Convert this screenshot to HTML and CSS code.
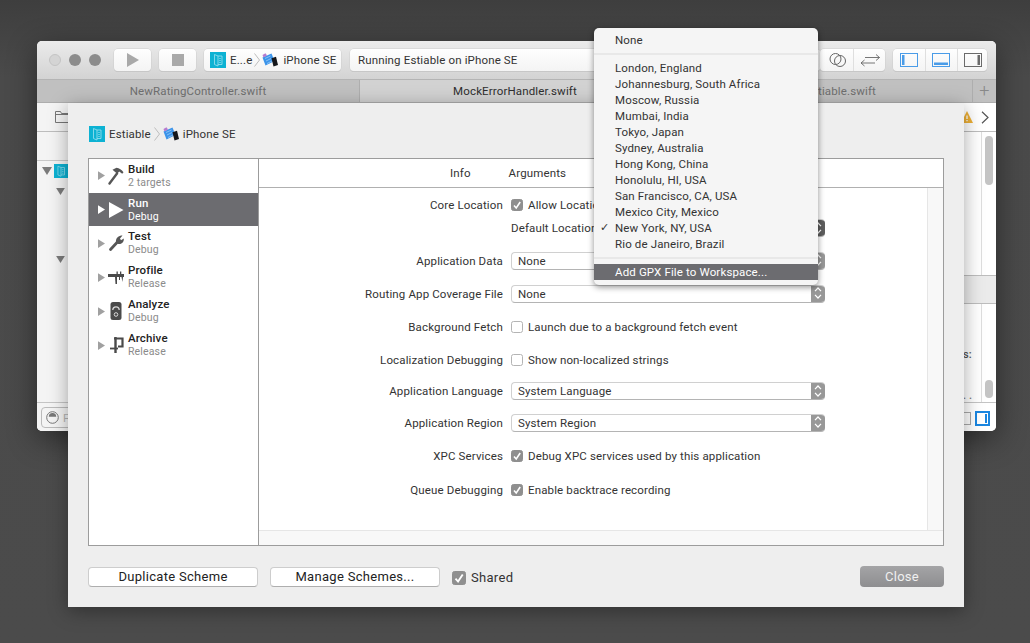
FILE: index.html
```html
<!DOCTYPE html>
<html lang="en">
<head>
<meta charset="utf-8">
<title>Estiable scheme editor</title>
<link rel="stylesheet" href="styles.css">
</head>
<body>
<svg class="defs" width="0" height="0" aria-hidden="true">
  <symbol id="proj" viewBox="0 0 16 16"><rect width="16" height="16" fill="#0db2d3"/><path d="M4.500 2.500 8 4v10l-3.500-1.500zM8 4h4v8.500H8" fill="none" stroke="#8fdcec" stroke-width=".9"/><path d="M9.200 6.500h1.600M9.200 8.500h1.600M9.200 10.500h1.600" stroke="#8fdcec" stroke-width=".8" fill="none"/></symbol>
  <symbol id="device" viewBox="0 0 16 14"><path d="M.5 4.500 9.500 .5 12.500 8 3.500 12.500z" fill="#3b94ea"/><path d="M3 5.500 8.500 3M4 8l5-2.500M5 10.500l5-2.500" stroke="#a9d3f8" stroke-width=".7"/><path d="M.5 2 3.500 .3 5 2.400 1.500 4.500z" fill="#b67ccf"/><path d="M9.500 5.300 14 3.800 16 12 11.500 13.600z" fill="#15171b"/></symbol>
  <symbol id="tri" viewBox="0 0 8 10"><path d="M0 0 8 5 0 10z" fill="currentColor"/></symbol>
  <symbol id="chev" viewBox="0 0 6 14"><path d="M.5 .5 5.500 7 .5 13.500" fill="none" stroke="#bdbdbd"/></symbol>
  <symbol id="down" viewBox="0 0 10 8"><path d="M0 0h10L5 8z" fill="#7b7b7b"/></symbol>
  <symbol id="stepper" viewBox="0 0 14 18"><path d="M4 7.200 7 4l3 3.200M4 10.800 7 14l3-3.200" fill="none" stroke="currentColor" stroke-width="1.200"/></symbol>
  <symbol id="check" viewBox="0 0 12 12"><path d="M3 6.500 5.200 9 9.200 3" fill="none" stroke="#fff" stroke-width="1.600"/></symbol>
</svg>

<div class="desktop">
  <section class="window">
    <header class="toolbar">
      <div class="lights"><span class="light light-off"></span><span class="light"></span><span class="light"></span></div>
      <button class="tool run-btn"><svg width="12" height="14" viewBox="0 0 12 14"><path d="M0 0 12 7 0 14z" fill="#a9a9a9"/></svg></button>
      <button class="tool stop-btn"><span class="stop-square"></span></button>
      <div class="tool scheme">
        <svg width="16" height="16"><use href="#proj"/></svg>
        <span class="scheme-name">E...e</span>
        <svg width="6" height="14"><use href="#chev"/></svg>
        <svg width="16" height="14"><use href="#device"/></svg>
        <span class="scheme-device">iPhone SE</span>
      </div>
      <div class="tool status">Running Estiable on iPhone SE</div>
      <div class="tool editor-group">
        <svg width="18" height="16" viewBox="0 0 18 16"><circle cx="6.500" cy="7" r="5.500" fill="none" stroke="#666"/><circle cx="11" cy="9" r="5.500" fill="none" stroke="#666"/></svg>
        <span class="divider"></span>
        <svg width="20" height="14" viewBox="0 0 20 14"><path d="M5 4.500h14.500M19.500 4.500l-3.500-3M19.500 4.500l-3.500 3M1 10h14M1 10l3.500-3M1 10l3.500 3" fill="none" stroke="#666" stroke-width=".9"/></svg>
      </div>
      <div class="tool view-group">
        <svg width="18" height="14" viewBox="0 0 18 14"><rect x=".5" y=".5" width="17" height="13" fill="none" stroke="#4a9ce8"/><rect x="2" y="2" width="2.500" height="10" fill="#4a9ce8"/></svg>
        <span class="divider"></span>
        <svg width="18" height="14" viewBox="0 0 18 14"><rect x=".5" y=".5" width="17" height="13" fill="none" stroke="#4a9ce8"/><rect x="2" y="9.500" width="14" height="2.500" fill="#4a9ce8"/></svg>
        <span class="divider"></span>
        <svg width="18" height="14" viewBox="0 0 18 14"><rect x=".5" y=".5" width="17" height="13" fill="none" stroke="#6a6a6a"/><rect x="13.500" y="2" width="2.500" height="10" fill="#6a6a6a"/></svg>
      </div>
    </header>
    <nav class="tabbar">
      <div class="doc-tab doc-tab-first">NewRatingController.swift</div>
      <div class="doc-tab doc-tab-active">MockErrorHandler.swift</div>
      <div class="doc-tab doc-tab-third">Estiable.swift</div>
      <div class="doc-tab-add">+</div>
    </nav>
    <div class="window-body">
      <aside class="navigator">
        <div class="nav-top">
          <svg width="15" height="12" viewBox="0 0 15 12"><path d="M.5 11.500V.5h5l1 2h8v9zM.5 3.500h14" fill="none" stroke="#777"/></svg>
        </div>
        <div class="nav-filter"></div>
        <div class="nav-tree">
          <div class="tree-row tree-project">
            <svg width="10" height="8"><use href="#down"/></svg>
            <svg width="14" height="16"><use href="#proj"/></svg>
          </div>
          <div class="tree-row tree-child"><svg width="9" height="7"><use href="#down"/></svg></div>
          <div class="tree-row tree-child tree-gap"><svg width="9" height="7"><use href="#down"/></svg></div>
        </div>
        <footer class="nav-bottom">
          <div class="filter-field">
            <svg width="13" height="13" viewBox="0 0 13 13"><circle cx="6.500" cy="6.500" r="5.800" fill="none" stroke="#777"/><path d="M2.800 5.800a3.700 3.700 0 0 1 7.400 0z" fill="#777"/></svg>
            <span class="filter-text">F</span>
          </div>
        </footer>
      </aside>
      <aside class="inspector">
        <div class="insp-top">
          <svg width="12" height="12" viewBox="0 0 12 12"><path d="M6 0 12 12H0z" fill="#eeb035"/><path d="M6 4.500v3.500M6 9v1.300" stroke="#fff" stroke-width="1.300"/></svg>
          <svg width="8" height="13" viewBox="0 0 8 13"><path d="M1 .8 7 6.500 1 12.200" fill="none" stroke="#555" stroke-width="1.200"/></svg>
        </div>
        <div class="insp-pane insp-upper"><div class="gutter"><span class="thumb thumb-long"></span></div></div>
        <div class="insp-band"></div>
        <div class="insp-pane insp-lower">
          <div class="insp-code"><span class="insp-text">s:</span><span class="insp-dots">. .</span></div>
          <div class="gutter gutter-end"><span class="thumb thumb-short"></span></div>
        </div>
        <footer class="insp-bottom"><span class="mini-box"></span><span class="mini-blue"><span class="mini-blue-bar"></span></span></footer>
      </aside>
    </div>
  </section>

  <section class="sheet">
    <div class="crumb">
      <svg width="16" height="16"><use href="#proj"/></svg>
      <span class="crumb-name">Estiable</span>
      <svg width="6" height="14"><use href="#chev"/></svg>
      <svg width="16" height="14"><use href="#device"/></svg>
      <span class="crumb-device">iPhone SE</span>
    </div>
    <div class="panel">
      <ul class="actions">
        <li class="action action-first">
          <svg class="tri" width="7" height="9"><use href="#tri"/></svg>
          <svg class="a-icon" width="16" height="18" viewBox="0 0 16 18"><path d="M1.500 16.500 9 6.500" stroke="#565656" stroke-width="2.400" fill="none" stroke-linecap="round"/><path d="M4.500 2.800 8.500 .8c2.800.4 5.200 2 7 4.500l-1.300 1.500-3-2.300-2 2.300z" fill="#565656"/></svg>
          <div><div class="a-title">Build</div><div class="a-sub">2 targets</div></div>
        </li>
        <li class="action action-on">
          <svg class="tri" width="7" height="9"><use href="#tri"/></svg>
          <svg class="a-icon" width="16" height="18" viewBox="0 0 16 18"><path d="M1 1 15.500 9 1 17z" fill="#fff"/></svg>
          <div><div class="a-title">Run</div><div class="a-sub">Debug</div></div>
        </li>
        <li class="action">
          <svg class="tri" width="7" height="9"><use href="#tri"/></svg>
          <svg class="a-icon" width="16" height="18" viewBox="0 0 16 18"><path d="M2.500 15.500 9 8.500" stroke="#565656" stroke-width="2.800" fill="none" stroke-linecap="round"/><path d="M8 8.500C7.500 4.500 10 1.500 14.500 1.500L12 4.500l1 1.800 2.800-1.800c.3 4-2.500 6-5.500 5.500z" fill="#565656"/></svg>
          <div><div class="a-title">Test</div><div class="a-sub">Debug</div></div>
        </li>
        <li class="action">
          <svg class="tri" width="7" height="9"><use href="#tri"/></svg>
          <svg class="a-icon" width="16" height="18" viewBox="0 0 16 18"><path d="M0 6h16v3h-1l-.6 5-.9-5h-1.500v3h-1V9H9v7H7.500L7 9H0z" fill="#4a4a4a"/><path d="M8.500 3.500h1.300V6H8.500zM12 3.500h1.300V6H12z" fill="#4a4a4a"/></svg>
          <div><div class="a-title">Profile</div><div class="a-sub">Release</div></div>
        </li>
        <li class="action">
          <svg class="tri" width="7" height="9"><use href="#tri"/></svg>
          <svg class="a-icon" width="16" height="18" viewBox="0 0 16 18"><rect x="2.500" y="0" width="11" height="18" rx="2.500" fill="#4a4a4a"/><path d="M4.800 8a3.200 3.200 0 0 1 6.400 0" fill="none" stroke="#d8d8d8" stroke-width="1.300"/><circle cx="8" cy="12.500" r="1.800" fill="none" stroke="#d8d8d8"/></svg>
          <div><div class="a-title">Analyze</div><div class="a-sub">Debug</div></div>
        </li>
        <li class="action">
          <svg class="tri" width="7" height="9"><use href="#tri"/></svg>
          <svg class="a-icon" width="16" height="18" viewBox="0 0 16 18"><path d="M6 2.500h8.500v8H10" fill="none" stroke="#4a4a4a" stroke-width="2.200"/><path d="M7.500 1v16" stroke="#4a4a4a" stroke-width="2.400"/><path d="M2 12.500h8" stroke="#4a4a4a" stroke-width="1.800"/></svg>
          <div><div class="a-title">Archive</div><div class="a-sub">Release</div></div>
        </li>
      </ul>
      <div class="detail">
        <div class="detail-tabs"><span>Info</span><span>Arguments</span></div>
        <div class="detail-body">
          <div class="form">
            <div class="row row-core"><label>Core Location</label><span class="cb cb-on"><svg width="12" height="12"><use href="#check"/></svg></span><span class="opt">Allow Location</span></div>
            <div class="row row-default"><label></label><span class="default-label">Default Location</span><div class="select select-fill"><span></span><i class="step step-dark"><svg width="14" height="18"><use href="#stepper"/></svg></i></div></div>
            <div class="row"><label>Application Data</label><div class="select"><span>None</span><i class="step"><svg width="14" height="18"><use href="#stepper"/></svg></i></div></div>
            <div class="row"><label>Routing App Coverage File</label><div class="select"><span>None</span><i class="step"><svg width="14" height="18"><use href="#stepper"/></svg></i></div></div>
            <div class="row"><label>Background Fetch</label><span class="cb"></span><span class="opt">Launch due to a background fetch event</span></div>
            <div class="row"><label>Localization Debugging</label><span class="cb"></span><span class="opt">Show non-localized strings</span></div>
            <div class="row row-31"><label>Application Language</label><div class="select"><span>System Language</span><i class="step"><svg width="14" height="18"><use href="#stepper"/></svg></i></div></div>
            <div class="row row-32"><label>Application Region</label><div class="select"><span>System Region</span><i class="step"><svg width="14" height="18"><use href="#stepper"/></svg></i></div></div>
            <div class="row"><label>XPC Services</label><span class="cb cb-on"><svg width="12" height="12"><use href="#check"/></svg></span><span class="opt">Debug XPC services used by this application</span></div>
            <div class="row row-34"><label>Queue Debugging</label><span class="cb cb-on"><svg width="12" height="12"><use href="#check"/></svg></span><span class="opt">Enable backtrace recording</span></div>
          </div>
          <div class="strip-right"></div>
        </div>
        <div class="strip-bottom"></div>
      </div>
    </div>
    <footer class="sheet-foot">
      <button class="btn">Duplicate Scheme</button>
      <button class="btn">Manage Schemes...</button>
      <span class="shared"><span class="cb cb-on cb-big"><svg width="14" height="14"><use href="#check"/></svg></span>Shared</span>
      <button class="btn btn-close">Close</button>
    </footer>
  </section>

  <ul class="menu">
    <li>None</li>
    <li class="sep"></li>
    <li>London, England</li>
    <li>Johannesburg, South Africa</li>
    <li>Moscow, Russia</li>
    <li>Mumbai, India</li>
    <li>Tokyo, Japan</li>
    <li>Sydney, Australia</li>
    <li>Hong Kong, China</li>
    <li>Honolulu, HI, USA</li>
    <li>San Francisco, CA, USA</li>
    <li>Mexico City, Mexico</li>
    <li class="checked">New York, NY, USA</li>
    <li>Rio de Janeiro, Brazil</li>
    <li class="sep"></li>
    <li class="hl">Add GPX File to Workspace...</li>
  </ul>
</div>
</body>
</html>
```

FILE: styles.css
```css
* { box-sizing: border-box; }
html, body { margin: 0; padding: 0; height: 100%; }
body { font-family: Roboto, "Liberation Sans", sans-serif; font-size: 11.5px; letter-spacing: .14px; color: #333; overflow: hidden; }
.defs { position: absolute; }
ul { list-style: none; margin: 0; padding: 0; }
button { font: inherit; letter-spacing: inherit; color: inherit; padding: 0; }
svg { display: block; flex: none; }

.desktop { position: relative; width: 1030px; height: 643px; background: linear-gradient(#3e3e3e, #4a4a4a 12%, #4b4b4b); overflow: hidden; }

/* main window */
.window { position: absolute; left: 37px; top: 41px; width: 959px; height: 390px; display: flex; flex-direction: column; border-radius: 5px; overflow: hidden; background: #fff; box-shadow: 0 8px 30px rgba(0,0,0,.45); }
.toolbar { height: 38px; flex: none; display: flex; align-items: center; padding-left: 12px; background: linear-gradient(#ebebeb, #d3d3d3); }
.lights { display: flex; gap: 8px; width: 65px; }
.light { width: 12px; height: 12px; border-radius: 50%; background: #8c8c8c; }
.light-off { background: #d4d4d4; border: 1px solid #c4c4c4; }
.tool { height: 22px; background: linear-gradient(#fefefe, #f4f4f4); border-radius: 4px; box-shadow: 0 0 0 .5px #cdcdcd, 0 1px 0 #c0c0c0; display: flex; align-items: center; border: 0; }
.run-btn { width: 37px; justify-content: center; margin-right: 8px; }
.stop-btn { width: 37px; justify-content: center; margin-right: 8px; }
.stop-square { width: 12px; height: 12px; background: #a9a9a9; }
.scheme { width: 137px; padding-left: 6px; gap: 2px; margin-right: 9px; }
.scheme-name { margin-left: 2px; }
.scheme-device { margin-left: 3px; }
.status { width: 470px; padding-left: 8px; }
.editor-group { width: 65px; justify-content: flex-end; gap: 6px; padding-right: 5px; margin-right: 8px; }
.view-group { width: 94px; padding: 0 5px 0 7px; justify-content: space-between; }
.divider { width: 1px; height: 22px; background: #dfdfdf; flex: none; }

.tabbar { height: 24px; flex: none; display: flex; background: #c0c0c0; border-top: 1px solid #b4b4b4; border-bottom: 1px solid #adadad; color: #6f6f6f; line-height: 22px; }
.doc-tab { text-align: center; border-right: 1px solid #aeaeae; }
.doc-tab-first { width: 323px; }
.doc-tab-active { width: 311px; background: #d2d2d2; color: #2e2e2e; }
.doc-tab-third { width: 302px; text-align: right; padding-right: 96px; }
.doc-tab-add { width: 23px; text-align: center; font-size: 18px; font-weight: 300; color: #888; }

.window-body { flex: 1; display: flex; justify-content: space-between; min-height: 0; }
.navigator { width: 45px; display: flex; flex-direction: column; background: #f4f4f4; }
.nav-top { height: 29px; flex: none; display: flex; align-items: center; padding-left: 18px; border-bottom: 1px solid #bdbdbd; }
.nav-filter { height: 29px; flex: none; border-bottom: 1px solid #c8c8c8; }
.nav-tree { flex: 1; }
.tree-row { display: flex; align-items: center; gap: 2px; height: 20px; }
.tree-project { padding-left: 5px; }
.tree-child { padding-left: 19px; }
.tree-gap { margin-top: 48px; }
.nav-bottom { height: 29px; flex: none; border-top: 1px solid #c4c4c4; padding: 4px 4px; background: #f4f4f4; }
.filter-field { height: 21px; border: 1px solid #bbb; border-radius: 4px; display: flex; align-items: center; gap: 4px; padding-left: 4px; color: #b5b5b5; width: 60px; }

.inspector { width: 35px; display: flex; flex-direction: column; background: #fff; }
.insp-top { height: 29px; flex: none; display: flex; align-items: center; gap: 8px; border-bottom: 1px solid #bdbdbd; }
.insp-pane { display: flex; justify-content: flex-end; }
.insp-upper { height: 143px; flex: none; }
.insp-band { height: 29px; flex: none; background: #ebebeb; border-top: 1px solid #bdbdbd; border-bottom: 1px solid #bdbdbd; }
.insp-lower { flex: 1; min-height: 0; justify-content: space-between; }
.gutter { width: 15px; flex: none; display: flex; flex-direction: column; padding: 4px 3px 4px 3px; border-left: 1px solid #dedede; }
.gutter-end { justify-content: flex-end; }
.thumb { width: 8px; border-radius: 4px; background: #c4c4c4; display: block; }
.thumb-long { height: 49px; }
.thumb-short { height: 18px; }
.insp-code { flex: 1; display: flex; flex-direction: column; justify-content: flex-end; padding-left: 2px; font-size: 11px; line-height: 12px; font-weight: 500; color: #555; }
.insp-text { margin-bottom: 29px; }
.insp-dots { color: #777; }
.insp-bottom { height: 29px; flex: none; border-top: 1px solid #c4c4c4; display: flex; align-items: center; padding-top: 2px; }
.mini-box { width: 10px; height: 13px; border: 1px solid #aaa; border-left: 0; margin-right: 4px; }
.mini-blue { width: 15px; height: 15px; border: 2px solid #1a86e0; display: flex; justify-content: flex-end; padding: 1px; }
.mini-blue-bar { width: 2px; background: #1a86e0; }

/* sheet */
.sheet { position: absolute; left: 68px; top: 103px; width: 896px; height: 504px; background: #eee; box-shadow: 0 4px 18px rgba(0,0,0,.35); padding: 22px 20px 0; display: flex; flex-direction: column; }
.crumb { height: 18px; flex: none; margin-bottom: 15px; padding-left: 1px; display: flex; align-items: center; gap: 3px; }
.crumb-name { margin-left: 1px; }
.crumb-device { margin-left: 1px; }
.panel { height: 388px; flex: none; display: flex; background: #fff; border: 1px solid #9c9c9c; }
.actions { width: 170px; border-right: 1px solid #9c9c9c; flex: none; }
.action { height: 34px; display: flex; align-items: center; padding-left: 9px; line-height: 14px; }
.action-first { padding-bottom: 1px; }
.action-on { background: #6c6c70; color: #fff; height: 33px; }
.tri { color: #a0a0a0; margin-right: 3px; }
.action-on .tri { color: #fff; }
.a-icon { margin-right: 4px; }
.a-title { font-weight: 500; color: #222; }
.a-sub { font-size: 10.5px; color: #8b8b8b; }
.action-on .a-title, .action-on .a-sub { color: #fff; }

.detail { flex: 1; display: flex; flex-direction: column; min-width: 0; }
.detail-tabs { height: 29px; flex: none; display: flex; align-items: center; gap: 38px; padding-left: 191px; border-bottom: 1px solid #b0b0b0; }
.detail-body { flex: 1; display: flex; min-height: 0; }
.form { flex: 1; padding-top: 7px; }
.strip-right { width: 16px; background: #f8f8f8; border-left: 1px solid #e6e6e6; }
.strip-bottom { height: 15px; flex: none; background: #f8f8f8; border-top: 1px solid #e6e6e6; }
.row { height: 33px; display: flex; align-items: center; }
.row-core { height: 20px; }
.row-default { height: 26px; margin-bottom: 3px; }
.row-31 { height: 30px; }
.row-32 { height: 33px; }
.row-34 { height: 35px; }
.row label { width: 244px; text-align: right; margin-right: 8px; flex: none; }
.opt { margin-left: 5px; white-space: nowrap; }
.cb { width: 12px; height: 12px; border: 1px solid #b4b4b4; border-radius: 2.500px; background: #fff; flex: none; display: block; }
.cb-on { background: #8f8f8f; border-color: #8f8f8f; }
.cb-on svg { margin: -1px; }
.select { width: 314px; height: 18px; display: flex; align-items: center; justify-content: space-between; background: #fff; border: 1px solid #d0d0d0; border-right: 0; border-bottom-color: #b4b4b4; border-radius: 4px; padding-left: 6px; overflow: hidden; }
.select-fill { width: 230px; }
.default-label { width: 84px; flex: none; white-space: nowrap; }
.step { width: 14px; height: 18px; margin-top: -1px; background: #989898; color: #fff; display: block; flex: none; }
.step-dark { background: #5e5e5e; }

.sheet-foot { display: flex; align-items: center; margin-top: 20px; font-size: 13px; letter-spacing: .3px; }
.btn { width: 170px; height: 20px; background: #fff; border: 1px solid #cdcdcd; border-bottom-color: #aeaeae; border-radius: 4px; margin-right: 12px; color: #222; line-height: 17px; }
.shared { display: flex; align-items: center; gap: 5px; padding-top: 2px; }
.cb-big { width: 14px; height: 14px; }
.btn-close { margin: 0 0 0 auto; width: 84px; height: 21px; background: linear-gradient(#a4a4a6, #8e8e90); border: 0; color: #f0f0f0; }

/* popup menu */
.menu { position: absolute; left: 594px; top: 28px; width: 224px; height: 257px; padding-top: 4px; background: #f5f5f5; border-radius: 5px; box-shadow: 0 2px 6px rgba(0,0,0,.45); overflow: hidden; }
.menu li { height: 16px; line-height: 16px; padding-left: 21px; position: relative; color: #333; }
.menu .sep { height: 12px; padding: 0; position: relative; }
.menu .sep::after { content: ""; position: absolute; left: 0; right: 0; top: 5px; height: 2px; background: #e8e8e8; }
.menu .checked::before { content: "\2713"; position: absolute; left: 6px; font-family: "DejaVu Sans", sans-serif; font-size: 11px; font-weight: 700; }
.menu .hl { background: #6c6c70; color: #fff; }
```
